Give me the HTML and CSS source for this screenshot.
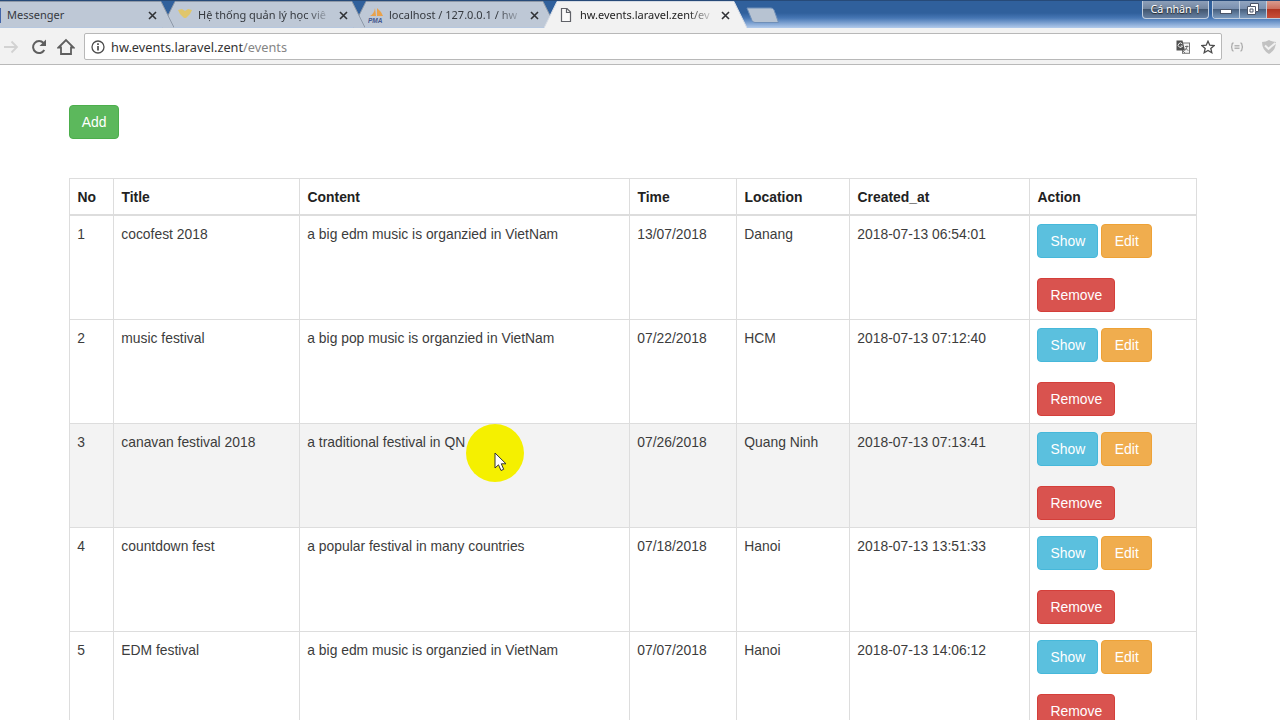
FILE: index.html
```html
<!DOCTYPE html>
<html lang="en">
  <head>
    <meta charset="utf-8" />
    <title>hw.events.laravel.zent/events</title>
    <link rel="stylesheet" href="styles.css">
  </head>

  <body>
    <!-- Browser tabs -->
    <div class="tab-bar">
      <div class="tab tab-first">
        <svg class="tab-shape" viewBox="0 0 203 28"><path d="M0 27.500 L13 1.500 H190 L203 27.500" /></svg>
        <span class="tab-edge"></span>
        <span class="tab-title">Messenger</span>
        <svg class="tab-close" viewBox="0 0 9 9"><path d="M1 1 L8 8 M8 1 L1 8" /></svg>
      </div>
      <div class="tab tab-second">
        <svg class="tab-shape" viewBox="0 0 203 28"><path d="M0 27.500 L13 1.500 H190 L203 27.500" /></svg>
        <svg class="tab-icon" viewBox="0 0 16 16"><path d="M1 3 L5 2 L8 4 L11 2 L15 3 L13 7 L9 11 L7 11 L3 7 Z" fill="#e0c66c" /></svg>
        <span class="tab-title fade">Hệ thống quản lý học viê</span>
        <svg class="tab-close" viewBox="0 0 9 9"><path d="M1 1 L8 8 M8 1 L1 8" /></svg>
      </div>
      <div class="tab tab-third">
        <svg class="tab-shape" viewBox="0 0 203 28"><path d="M0 27.500 L13 1.500 H190 L203 27.500" /></svg>
        <svg class="tab-icon" viewBox="0 0 16 16">
          <path d="M2 9 Q6 7 7 1 L8 9 Z M9 9 V1 Q13 4 15 9 Z" fill="#e9a24c" />
          <text x="0" y="15.500" class="pma">PMA</text>
        </svg>
        <span class="tab-title fade">localhost / 127.0.0.1 / hw</span>
        <svg class="tab-close" viewBox="0 0 9 9"><path d="M1 1 L8 8 M8 1 L1 8" /></svg>
      </div>
      <div class="tab active">
        <svg class="tab-shape" viewBox="0 0 203 28"><path d="M0 28 L13 1.500 H190 L203 28" /></svg>
        <svg class="tab-icon" viewBox="0 0 16 16"><path d="M2.500 1.500 H8 L11.500 5 V14.500 H2.500 Z M7.500 1.500 V5.500 H11.500" fill="#fafafa" stroke="#606268" stroke-width="1.200" /></svg>
        <span class="tab-title fade">hw.events.laravel.zent/ev</span>
        <svg class="tab-close" viewBox="0 0 9 9"><path d="M1 1 L8 8 M8 1 L1 8" /></svg>
      </div>
      <svg class="new-tab" viewBox="0 0 34 17"><path d="M1 1 H25 Q27 1 28 3 L32.500 15.500 H9 Q7 15.500 6 13.500 Z" /></svg>

      <div class="window-buttons">
        <span class="profile">Cá nhân 1</span>
        <span class="controls">
          <span class="control"><svg viewBox="0 0 14 14"><rect x="1.500" y="7.500" width="11" height="4" fill="#fff" stroke="#4b5568" /></svg></span>
          <span class="control"><svg viewBox="0 0 14 14"><path d="M4.500 1.500 H12.500 V9.500 H9.500 V12.500 H1.500 V4.500 H4.500 Z" fill="#fff" stroke="#4b5568" /><path d="M4 7 H7 V10 H4 Z M5 4.500 H9.500 V9" fill="none" stroke="#4b5568" /></svg></span>
          <span class="control quit"></span>
        </span>
      </div>
    </div>

    <!-- Address bar -->
    <div class="toolbar">
      <svg class="nav-icon" viewBox="0 0 18 18"><path d="M2 9 H15 M9.500 3.500 L15 9 L9.500 14.500" fill="none" stroke="#d2d2d2" stroke-width="1.800" /></svg>
      <svg class="nav-icon" viewBox="0 0 18 18"><path d="M14.300 12 A6 6 0 1 1 13.500 5" fill="none" stroke="#5f5f5f" stroke-width="2" /><path d="M16 1.500 V8 H9.500 Z" fill="#5f5f5f" /></svg>
      <svg class="nav-icon" viewBox="0 0 18 18"><path d="M1.500 9.500 L9 2 L16.500 9.500 H14 V16 H4 V9.500 Z" fill="none" stroke="#5f5f5f" stroke-width="1.800" /></svg>
      <div class="address">
        <svg class="info" viewBox="0 0 14 14"><circle cx="7" cy="7" r="6" fill="none" stroke="#4c4c4c" stroke-width="1.300" /><path d="M7 6 V10.500 M7 3.300 V4.900" stroke="#4c4c4c" stroke-width="1.700" /></svg>
        <span class="url">hw.events.laravel.zent<span class="path">/events</span></span>
        <svg class="translate" viewBox="0 0 14 14">
          <rect x="6.500" y="3" width="7" height="10.300" fill="#f4f4f4" stroke="#777" />
          <path d="M0.500 0.500 H6.500 L9 10.500 H0.500 Z" fill="#505050" />
          <path d="M6.300 4 A2.200 2.200 0 1 0 6.500 6 H4.700" fill="none" stroke="#eee" />
          <path d="M9 6.500 H12.500 M11 5.500 Q11.500 8.500 8.800 10.500 M9.500 8 L12.300 10.800 M7 11 L9 13" fill="none" stroke="#666" stroke-width=".9" />
        </svg>
        <svg class="star" viewBox="0 0 14 14"><path d="M7 1.200 L8.800 5.200 L13.100 5.600 L9.800 8.400 L10.800 12.700 L7 10.400 L3.200 12.700 L4.200 8.400 L0.900 5.600 L5.200 5.200 Z" fill="none" stroke="#4c4c4c" stroke-width="1.300" /></svg>
      </div>
      <svg class="ext" viewBox="0 0 14 14"><path d="M3.500 3 Q2 3 2 5 Q2 7 1 7 Q2 7 2 9 Q2 11 3.500 11 M10.500 3 Q12 3 12 5 Q12 7 13 7 Q12 7 12 9 Q12 11 10.500 11" fill="none" stroke="#acacac" stroke-width="1.300" /><path d="M4.500 5.500 H9.500 M4.500 7 H9.500 M4.500 8.500 H9.500" stroke="#b4b4b4" /></svg>
      <svg class="shield" viewBox="0 0 16 16"><path d="M1 3 Q5 3 8 1 Q11 3 15 3 Q15 11 8 15 Q1 11 1 3 Z" fill="#c2c2c2" /><path d="M4 6.500 L7.500 9.800 L14.500 4" fill="none" stroke="#f1f1f1" stroke-width="2" /></svg>
    </div>

    <!-- Page -->
    <div class="container">
      <button class="btn btn-success">Add</button>

      <table class="table">
        <thead>
          <tr>
            <th class="col-no">No</th>
            <th class="col-title">Title</th>
            <th class="col-content">Content</th>
            <th class="col-time">Time</th>
            <th class="col-location">Location</th>
            <th class="col-created">Created_at</th>
            <th class="col-action">Action</th>
          </tr>
        </thead>
        <tbody>
          <tr>
            <td>1</td>
            <td>cocofest 2018</td>
            <td>a big edm music is organzied in VietNam</td>
            <td>13/07/2018</td>
            <td>Danang</td>
            <td>2018-07-13 06:54:01</td>
            <td>
              <div class="actions">
                <button class="btn btn-info">Show</button>
                <button class="btn btn-warning">Edit</button>
                <button class="btn btn-danger">Remove</button>
              </div>
            </td>
          </tr>
          <tr>
            <td>2</td>
            <td>music festival</td>
            <td>a big pop music is organzied in VietNam</td>
            <td>07/22/2018</td>
            <td>HCM</td>
            <td>2018-07-13 07:12:40</td>
            <td>
              <div class="actions">
                <button class="btn btn-info">Show</button>
                <button class="btn btn-warning">Edit</button>
                <button class="btn btn-danger">Remove</button>
              </div>
            </td>
          </tr>
          <tr class="hovered">
            <td>3</td>
            <td>canavan festival 2018</td>
            <td class="pointed">
              a traditional festival in QN
              <span class="pointer">
                <svg viewBox="0 0 14 20"><path d="M1 1 V16 L4.500 12.800 L7 18.500 L9.700 17.300 L7.300 11.800 H12 Z" fill="#fff" stroke="#333" /></svg>
              </span>
            </td>
            <td>07/26/2018</td>
            <td>Quang Ninh</td>
            <td>2018-07-13 07:13:41</td>
            <td>
              <div class="actions">
                <button class="btn btn-info">Show</button>
                <button class="btn btn-warning">Edit</button>
                <button class="btn btn-danger">Remove</button>
              </div>
            </td>
          </tr>
          <tr>
            <td>4</td>
            <td>countdown fest</td>
            <td>a popular festival in many countries</td>
            <td>07/18/2018</td>
            <td>Hanoi</td>
            <td>2018-07-13 13:51:33</td>
            <td>
              <div class="actions">
                <button class="btn btn-info">Show</button>
                <button class="btn btn-warning">Edit</button>
                <button class="btn btn-danger">Remove</button>
              </div>
            </td>
          </tr>
          <tr>
            <td>5</td>
            <td>EDM festival</td>
            <td>a big edm music is organzied in VietNam</td>
            <td>07/07/2018</td>
            <td>Hanoi</td>
            <td>2018-07-13 14:06:12</td>
            <td>
              <div class="actions">
                <button class="btn btn-info">Show</button>
                <button class="btn btn-warning">Edit</button>
                <button class="btn btn-danger">Remove</button>
              </div>
            </td>
          </tr>
        </tbody>
      </table>
    </div>
  </body>
</html>
```
FILE: styles.css
```css
* {
  box-sizing: border-box;
}

html,
body {
  margin: 0;
  height: 720px;
  overflow: hidden;
  background: #fff;
}

body {
  font-family: "Liberation Sans", Arial, sans-serif;
  font-size: 13.87px;
  line-height: 20px;
  color: #3c3c3c;
}

/* ===== Browser tabs ===== */
.tab-bar {
  display: flex;
  height: 28px;
  background: linear-gradient(#30609c 0, #30609c 12px, #4676b4 17px, #b3cbec 27px);
  border-top: 1px solid #274a78;
  font-family: "Noto Sans", "Open Sans", sans-serif;
  font-size: 11px;
  overflow: hidden;
}

.tab {
  position: relative;
  flex: none;
  display: flex;
  align-items: center;
  width: 203px;
  height: 28px;
  margin: -1px -12px 0 0;
  padding: 2px 17px 0 24px;
  color: #35393f;
}

.tab-first {
  z-index: 4;
  margin-left: -29px;
  padding-left: 29px;
}

.tab-second {
  z-index: 3;
  padding-left: 15px;
}

.tab-third {
  z-index: 2;
  padding-left: 15px;
}

.active {
  z-index: 5;
  padding-left: 15px;
  color: #222;
}

/* slanted outline behind the tab content */
.tab-shape {
  position: absolute;
  left: 0;
  top: 0;
  z-index: -1;
  width: 203px;
  height: 28px;
  fill: #bec8d6;
  stroke: #8f99a8;
}

.active .tab-shape {
  fill: #f2f2f2;
  stroke: #d5dbe4;
}

.tab-edge {
  width: 1px;
  height: 15px;
  background: #4264a8;
}

.tab-icon {
  flex: none;
  width: 16px;
  height: 16px;
  margin-right: 5px;
}

.pma {
  font: italic bold 6.500px "Liberation Sans", sans-serif;
  fill: #45588e;
}

.tab-title {
  flex: 1;
  margin-left: 6px;
  margin-right: 6px;
  white-space: nowrap;
}

.tab-icon + .tab-title {
  margin-left: 0;
}

.fade {
  -webkit-mask-image: linear-gradient(to right, #000 80%, transparent);
  mask-image: linear-gradient(to right, #000 80%, transparent);
}

.tab-close {
  flex: none;
  width: 9px;
  height: 9px;
  fill: none;
  stroke: #303236;
  stroke-width: 1.600;
}

.new-tab {
  flex: none;
  width: 34px;
  height: 17px;
  margin: 6px 0 0 11px;
  fill: #b7c3d2;
  stroke: #6f8fb8;
}

.window-buttons {
  display: flex;
  gap: 3px;
  margin-left: auto;
  margin-right: -28px;
  height: 18px;
  font-size: 10.700px;
  line-height: 16px;
  color: #fff;
}

.profile {
  width: 67px;
  height: 18px;
  text-align: center;
  text-shadow: 0 1px 1px #222;
  background: linear-gradient(#8d9fb9 0, #73869f 45%, #42566f 50%, #6680a2);
  border: 1px solid #c0cddd;
  border-top: none;
  border-radius: 0 0 4px 4px;
}

.controls {
  display: flex;
  border: 1px solid #c0cddd;
  border-top: none;
  border-radius: 0 0 4px 4px;
  overflow: hidden;
}

.control {
  display: flex;
  align-items: center;
  justify-content: center;
  width: 27px;
  background: linear-gradient(#91a5c0 0, #7b91b0 45%, #49617f 50%, #7b9abd);
  border-right: 1px solid #c0cddd;
}

.control svg {
  width: 14px;
  height: 14px;
  margin-top: -2px;
}

.quit {
  width: 40px;
  background: linear-gradient(#d99b8e 0, #cc705f 45%, #b03521 50%, #c94f38);
}

/* ===== Address bar ===== */
.toolbar {
  display: flex;
  align-items: center;
  height: 37px;
  background: #f2f2f2;
  border-bottom: 1px solid #b9b9b9;
  padding: 1px 0 0 2px;
}

.nav-icon {
  flex: none;
  width: 18px;
  height: 18px;
  margin-right: 9.500px;
}

.address {
  display: flex;
  align-items: center;
  width: 1138px;
  height: 27px;
  margin-left: -0.500px;
  padding: 0 6px 0 6px;
  background: #fff;
  border: 1px solid #b8b8b8;
  border-radius: 2px;
}

.info {
  width: 14px;
  height: 14px;
}

.url {
  flex: 1;
  margin-left: 6px;
  font-family: "Noto Sans", "Open Sans", sans-serif;
  font-size: 12.750px;
  color: #333;
}

.path {
  color: #858585;
}

.translate,
.star {
  width: 14px;
  height: 14px;
  margin-left: 11px;
}

.ext {
  width: 14px;
  height: 14px;
  margin-left: 8px;
}

.shield {
  flex: none;
  width: 16px;
  height: 16px;
  margin-left: 17px;
}

/* ===== Page ===== */
.container {
  width: 1128px;
  margin-left: 69px;
  padding-top: 40px;
}

.btn {
  display: inline-block;
  height: 34px;
  padding: 0 11px;
  border: 1px solid transparent;
  border-radius: 4px;
  font-family: inherit;
  font-size: 13.900px;
  line-height: 20px;
  color: #fff;
  cursor: pointer;
}

.btn-success {
  display: block;
  width: 50px;
  background: #5cb85c;
  border-color: #4cae4c;
}

.btn-info {
  width: 61px;
  background: #5bc0de;
  border-color: #46b8da;
}

.btn-warning {
  width: 51px;
  background: #f0ad4e;
  border-color: #eea236;
}

.btn-danger {
  width: 78px;
  background: #d9534f;
  border-color: #d43f3a;
}

.table {
  width: 1128px;
  margin-top: 39px;
  table-layout: fixed;
  border-collapse: collapse;
}

.table th,
.table td {
  padding: 8px 7.500px;
  border: 1px solid #ddd;
  text-align: left;
  vertical-align: top;
}

.table th {
  height: 36px;
  padding-bottom: 7px;
  border-bottom-width: 2px;
  font-size: 13.900px;
  color: #222;
}

.table td {
  height: 104px;
  padding: 8px 7.300px 7px;
}

.col-no { width: 44px; }
.col-title { width: 186px; }
.col-content { width: 330px; }
.col-time { width: 107px; }
.col-location { width: 113px; }
.col-created { width: 180px; }
.col-action { width: 167px; }

.hovered {
  background: #f3f3f3;
}

.actions {
  display: flex;
  flex-wrap: wrap;
  gap: 20px 3px;
  width: 120px;
}

/* highlighted mouse pointer */
.pointed {
  position: relative;
}

.pointer {
  position: absolute;
  left: 166px;
  top: 0;
  width: 58px;
  height: 58px;
  border-radius: 50%;
  background: #f5f000;
}

.pointer svg {
  position: absolute;
  left: 28px;
  top: 28px;
  width: 14px;
  height: 20px;
}
```
